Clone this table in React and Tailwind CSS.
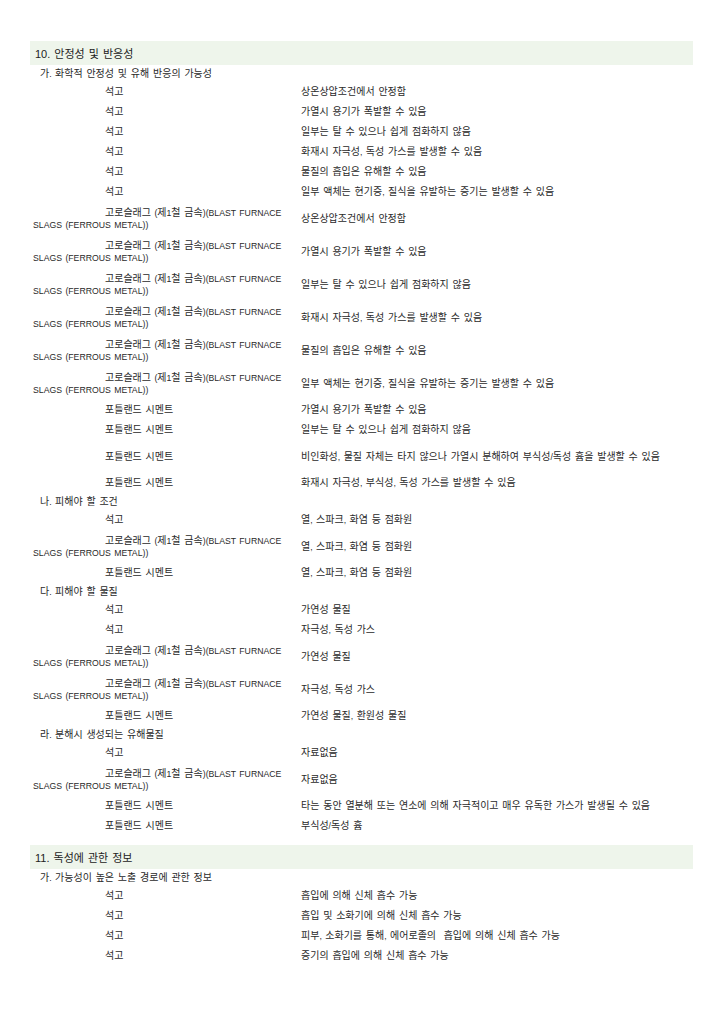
const GYPSUM = "석고";
const SLAG = "고로슬래그 (제1철 금속)(BLAST FURNACE SLAGS (FERROUS METAL))";
const CEMENT = "포틀랜드 시멘트";

const sections = [
  {
    title: "10. 안정성 및 반응성",
    groups: [
      {
        heading: "가. 화학적 안정성 및 유해 반응의 가능성",
        rows: [
          [GYPSUM, "상온상압조건에서 안정함"],
          [GYPSUM, "가열시 용기가 폭발할 수 있음"],
          [GYPSUM, "일부는 탈 수 있으나 쉽게 점화하지 않음"],
          [GYPSUM, "화재시 자극성, 독성 가스를 발생할 수 있음"],
          [GYPSUM, "물질의 흡입은 유해할 수 있음"],
          [GYPSUM, "일부 액체는 현기증, 질식을 유발하는 증기는 발생할 수 있음"],
          [SLAG, "상온상압조건에서 안정함"],
          [SLAG, "가열시 용기가 폭발할 수 있음"],
          [SLAG, "일부는 탈 수 있으나 쉽게 점화하지 않음"],
          [SLAG, "화재시 자극성, 독성 가스를 발생할 수 있음"],
          [SLAG, "물질의 흡입은 유해할 수 있음"],
          [SLAG, "일부 액체는 현기증, 질식을 유발하는 증기는 발생할 수 있음"],
          [CEMENT, "가열시 용기가 폭발할 수 있음"],
          [CEMENT, "일부는 탈 수 있으나 쉽게 점화하지 않음"],
          [CEMENT, "비인화성, 물질 자체는 타지 않으나 가열시 분해하여 부식성/독성 흄을 발생할 수 있음", true],
          [CEMENT, "화재시 자극성, 부식성, 독성 가스를 발생할 수 있음"],
        ],
      },
      {
        heading: "나. 피해야 할 조건",
        rows: [
          [GYPSUM, "열, 스파크, 화염 등 점화원"],
          [SLAG, "열, 스파크, 화염 등 점화원"],
          [CEMENT, "열, 스파크, 화염 등 점화원"],
        ],
      },
      {
        heading: "다. 피해야 할 물질",
        rows: [
          [GYPSUM, "가연성 물질"],
          [GYPSUM, "자극성, 독성 가스"],
          [SLAG, "가연성 물질"],
          [SLAG, "자극성, 독성 가스"],
          [CEMENT, "가연성 물질, 환원성 물질"],
        ],
      },
      {
        heading: "라. 분해시 생성되는 유해물질",
        rows: [
          [GYPSUM, "자료없음"],
          [SLAG, "자료없음"],
          [CEMENT, "타는 동안 열분해 또는 연소에 의해 자극적이고 매우 유독한 가스가 발생될 수 있음"],
          [CEMENT, "부식성/독성 흄"],
        ],
      },
    ],
  },
  {
    title: "11. 독성에 관한 정보",
    groups: [
      {
        heading: "가. 가능성이 높은 노출 경로에 관한 정보",
        rows: [
          [GYPSUM, "흡입에 의해 신체 흡수 가능"],
          [GYPSUM, "흡입 및 소화기에 의해 신체 흡수 가능"],
          [GYPSUM, "피부, 소화기를 통해, 에어로졸의  흡입에 의해 신체 흡수 가능"],
          [GYPSUM, "증기의 흡입에 의해 신체 흡수 가능"],
        ],
      },
    ],
  },
];

// hangul runs a bit bigger than the latin ones, like the original sheet
function Mixed({ text }) {
  return (
    <span className="[word-spacing:1px]">
      {text.split(/([\uAC00-\uD7A3]+)/).map((part, i) =>
        /[\uAC00-\uD7A3]/.test(part) || part.trim() === "" ? (
          <span key={i} className="text-[10px]">{part}</span>
        ) : (
          <span key={i} className="text-[8.7px]">{part}</span>
        )
      )}
    </span>
  );
}

function Row({ name, value, tall }) {
  const double = tall || name === SLAG;
  return (
    <div className={`flex items-center ${double ? "h-[33px]" : "h-[20px]"}`}>
      <div className="w-[271px] shrink-0 pl-[3px] pr-[8px] indent-[72px] leading-[12px]">
        <Mixed text={name} />
      </div>
      <div className="leading-[12px] whitespace-pre">
        <Mixed text={value} />
      </div>
    </div>
  );
}

export default function App() {
  return (
    <div
      className="min-h-[1024px] w-[724px] bg-white pt-[41px] text-[10px] text-[#2a2a2a]"
      style={{ fontFamily: '"Liberation Sans", "Noto Sans CJK KR", sans-serif' }}
    >
      {sections.map((section) => (
        <section key={section.title} className="ml-[30px] mb-[9px] w-[663px]">
          <div className="flex h-[24px] items-center bg-[#eef5eb] pl-[5px] pt-[2px] text-[11px] text-[#222]">
            <span className="[word-spacing:1px]">{section.title}</span>
          </div>
          {section.groups.map((group) => (
            <div key={group.heading} className="h-auto">
              <div className="h-[17px] pl-[10px] pt-[3px] leading-[12px]">
                <Mixed text={group.heading} />
              </div>
              {group.rows.map(([name, value, tall], i) => (
                <Row key={i} name={name} value={value} tall={tall} />
              ))}
            </div>
          ))}
        </section>
      ))}
    </div>
  );
}
